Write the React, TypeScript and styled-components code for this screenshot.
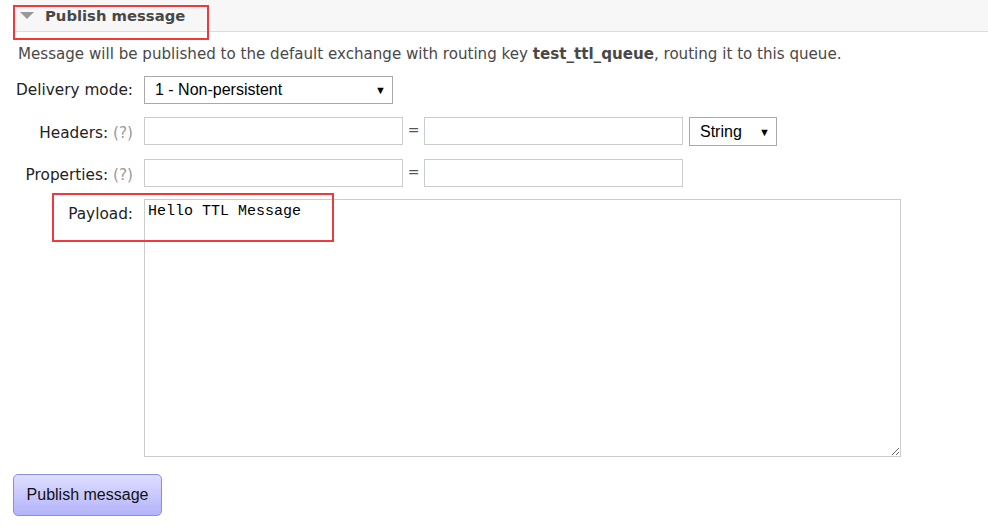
import React from "react";
import styled, { createGlobalStyle } from "styled-components";

const Global = createGlobalStyle`
  html, body { margin: 0; padding: 0; background: #fff; }
  body { font-family: "DejaVu Sans", Verdana, sans-serif; color: #484848; }
`;

const Page = styled.div`
  position: relative;
  width: 988px;
  height: 530px;
  overflow: hidden;
`;

const SectionHeader = styled.div`
  margin-left: 13px;
  height: 31px;
  background: #f7f7f7;
  border-bottom: 1px solid #dddddd;
  display: flex;
  align-items: center;
  gap: 11px;
  padding-left: 7px;
`;

const HeaderTitle = styled.h2`
  margin: 0;
  font-size: 14.8px;
  font-weight: bold;
  color: #484848;
  font-family: "DejaVu Sans", Verdana, sans-serif;
`;

const Body = styled.div`
  padding-left: 18px;
`;

const Description = styled.p`
  margin: 0;
  padding-top: 12px;
  font-size: 15.1px;
  line-height: 20px;
  color: #484848;
  white-space: nowrap;
`;

const Form = styled.div`
  margin-top: 12px;
  margin-left: 13px;
  display: grid;
  grid-template-columns: 120px 1fr;
  column-gap: 11px;
`;

const Label = styled.div<{ $top?: number }>`
  text-align: right;
  font-size: 15.3px;
  color: #222;
  padding-top: ${(p) => p.$top ?? 6}px;
  white-space: nowrap;
`;

const Help = styled.span`
  color: #999;
`;

const Fields = styled.div<{ $mb: number }>`
  display: flex;
  align-items: flex-start;
  margin-bottom: ${(p) => p.$mb}px;
`;

const SelectBox = styled.div<{ $w: number; $h: number; $pl: number }>`
  box-sizing: border-box;
  width: ${(p) => p.$w}px;
  height: ${(p) => p.$h}px;
  border: 1px solid #a9a9a9;
  background: #fff;
  display: flex;
  align-items: center;
  justify-content: space-between;
  padding: 0 6px 0 ${(p) => p.$pl}px;
  font-family: "Liberation Sans", Arial, sans-serif;
  font-size: 16px;
  color: #000;
`;

const Arrow = styled.span`
  font-size: 11px;
  color: #000;
`;

const TextInput = styled.input`
  box-sizing: border-box;
  width: 259px;
  height: 28px;
  border: 1px solid #cccccc;
  margin: 0;
  padding: 2px 4px;
  font-family: "Liberation Sans", Arial, sans-serif;
  font-size: 14px;
  outline: none;
`;

const Equals = styled.span`
  width: 21px;
  text-align: center;
  line-height: 26px;
  font-size: 14px;
  color: #555;
`;

const StringSelect = styled(SelectBox)`
  margin-left: 6px;
`;

const Payload = styled.textarea`
  box-sizing: border-box;
  width: 757px;
  height: 258px;
  border: 1px solid #cccccc;
  margin: 0;
  padding: 3px 3px;
  font-family: "Liberation Mono", "Courier New", monospace;
  font-size: 15px;
  line-height: 18px;
  color: #000;
  outline: none;
  resize: both;
`;

const PublishButton = styled.button`
  margin: 17px 0 0 13px;
  width: 149px;
  height: 42px;
  border: 1px solid #8d8de0;
  border-radius: 5px;
  background: linear-gradient(#dedeff, #b3b3fb);
  font-family: "Liberation Sans", Arial, sans-serif;
  font-size: 16px;
  color: #111;
  padding: 0;
  cursor: pointer;
`;

const Annotation = styled.div<{ $x: number; $y: number; $w: number; $h: number }>`
  position: absolute;
  left: ${(p) => p.$x}px;
  top: ${(p) => p.$y}px;
  width: ${(p) => p.$w}px;
  height: ${(p) => p.$h}px;
  box-sizing: border-box;
  border: 2px solid #f0393c;
  pointer-events: none;
`;

export default function App() {
  return (
    <>
      <Global />
      <Page>
        <SectionHeader>
          <svg width="14" height="8" viewBox="0 0 14 8">
            <polygon points="0,0 14,0 7,7" fill="#999" />
          </svg>
          <HeaderTitle>Publish message</HeaderTitle>
        </SectionHeader>
        <Body>
          <Description>
            Message will be published to the default exchange with routing key <b>test_ttl_queue</b>, routing it to this queue.
          </Description>
        </Body>
        <Form>
          <Label $top={5}>Delivery mode:</Label>
          <Fields $mb={13}>
            <SelectBox $w={249} $h={28} $pl={10}>
              <span>1 - Non-persistent</span>
              <Arrow>▼</Arrow>
            </SelectBox>
          </Fields>

          <Label $top={7}>
            Headers: <Help>(?)</Help>
          </Label>
          <Fields $mb={13}>
            <TextInput />
            <Equals>=</Equals>
            <TextInput />
            <StringSelect $w={88} $h={29} $pl={10}>
              <span>String</span>
              <Arrow>▼</Arrow>
            </StringSelect>
          </Fields>

          <Label $top={7}>
            Properties: <Help>(?)</Help>
          </Label>
          <Fields $mb={12}>
            <TextInput />
            <Equals>=</Equals>
            <TextInput />
          </Fields>

          <Label $top={6}>Payload:</Label>
          <Fields $mb={0}>
            <Payload defaultValue="Hello TTL Message" />
          </Fields>
        </Form>
        <PublishButton>Publish message</PublishButton>
        <Annotation $x={13} $y={5} $w={196} $h={35} />
        <Annotation $x={52} $y={193} $w={282} $h={49} />
      </Page>
    </>
  );
}
